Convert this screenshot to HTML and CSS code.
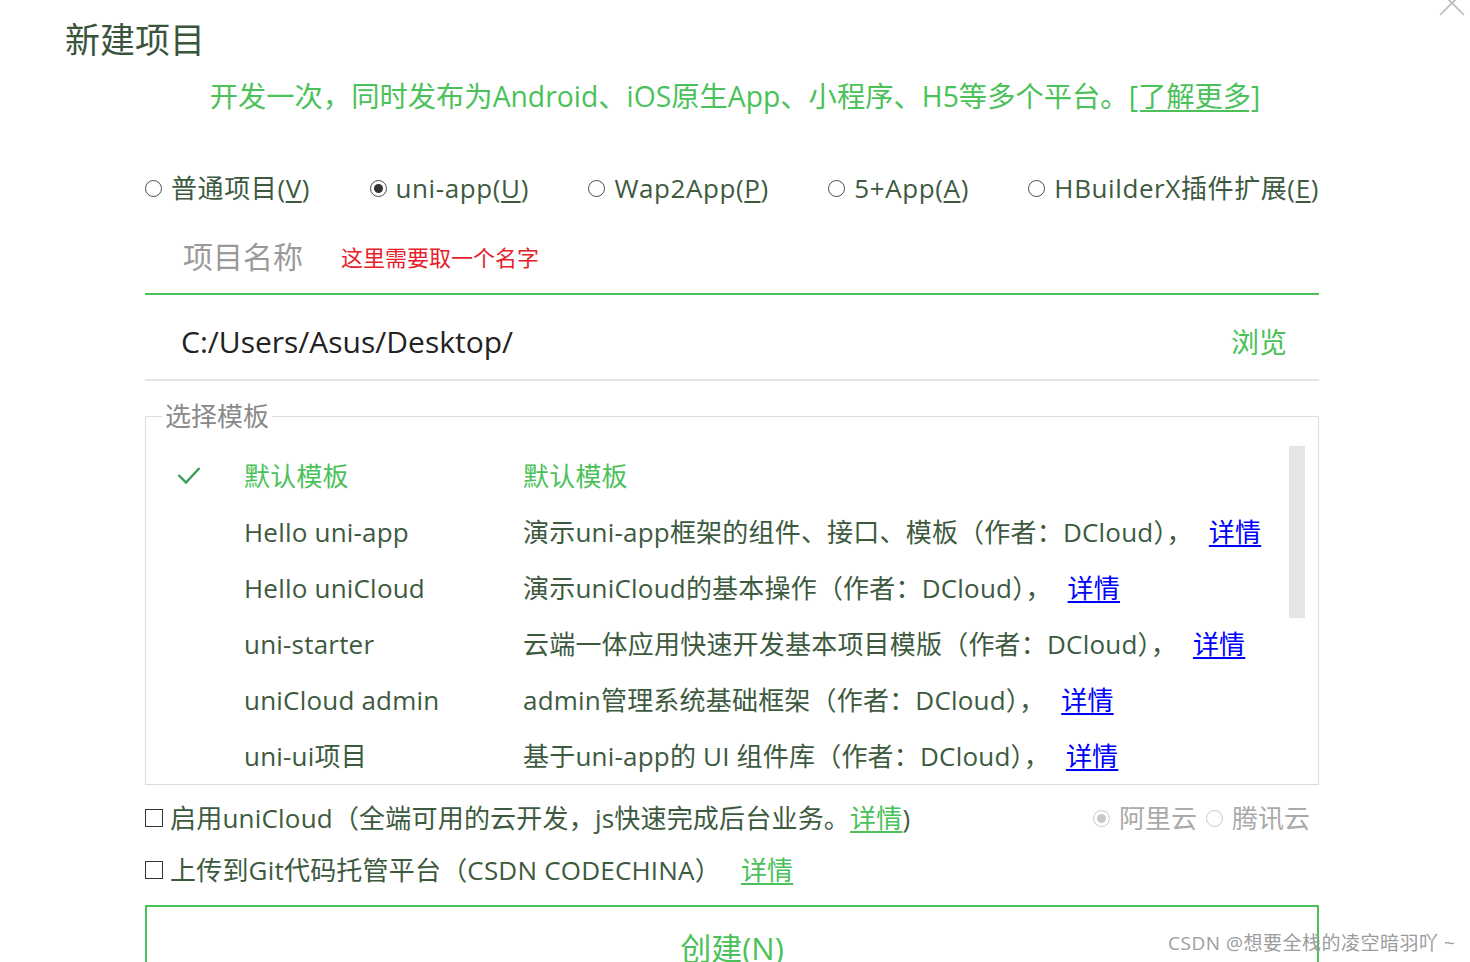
FILE: index.html
```html
<!DOCTYPE html>
<html lang="zh-CN">
<head>
<meta charset="utf-8">
<title>新建项目</title>
<link rel="stylesheet" href="styles.css">
</head>
<body>
<div class="page">
  <svg class="close" width="30" height="18" viewBox="0 0 30 18"><path d="M3 15 L15 3 L27 15 M3 -9 L15 3 L27 -9" fill="none" stroke="#b9b9b9" stroke-width="1.6"/></svg>

  <h1 class="title">新建项目</h1>
  <p class="intro">开发一次，同时发布为Android、iOS原生App、小程序、H5等多个平台。<a class="more">[了解更多]</a></p>

  <div class="form">
    <div class="types">
      <label class="radio"><span class="dot"></span><span>普通项目(<u>V</u>)</span></label>
      <label class="radio"><span class="dot on"></span><span>uni-app(<u>U</u>)</span></label>
      <label class="radio"><span class="dot"></span><span>Wap2App(<u>P</u>)</span></label>
      <label class="radio"><span class="dot"></span><span>5+App(<u>A</u>)</span></label>
      <label class="radio"><span class="dot"></span><span>HBuilderX插件扩展(<u>E</u>)</span></label>
    </div>

    <div class="field name">
      <span class="placeholder">项目名称</span>
      <span class="hint">这里需要取一个名字</span>
    </div>

    <div class="field path">
      <span class="value">C:/Users/Asus/Desktop/</span>
      <span class="browse">浏览</span>
    </div>

    <fieldset class="templates">
      <legend>选择模板</legend>
      <div class="list">
        <div class="row sel">
          <span class="chk"><svg width="24" height="20" viewBox="0 0 24 20"><path d="M1.5 9 L9 16.5 L22.5 2" fill="none" stroke="#3a9d57" stroke-width="2.4"/></svg></span>
          <span>默认模板</span><span>默认模板</span>
        </div>
        <div class="row"><span class="chk"></span><span>Hello uni-app</span><span>演示uni-app框架的组件、接口、模板（作者：DCloud），<a class="link">详情</a></span></div>
        <div class="row"><span class="chk"></span><span>Hello uniCloud</span><span>演示uniCloud的基本操作（作者：DCloud），<a class="link">详情</a></span></div>
        <div class="row"><span class="chk"></span><span>uni-starter</span><span>云端一体应用快速开发基本项目模版（作者：DCloud），<a class="link">详情</a></span></div>
        <div class="row"><span class="chk"></span><span>uniCloud admin</span><span>admin管理系统基础框架（作者：DCloud），<a class="link">详情</a></span></div>
        <div class="row"><span class="chk"></span><span>uni-ui项目</span><span>基于uni-app的 UI 组件库（作者：DCloud），<a class="link">详情</a></span></div>
        <div class="thumb"></div>
      </div>
    </fieldset>

    <div class="option">
      <label class="check"><span class="box"></span><span>启用uniCloud（全端可用的云开发，js快速完成后台业务。<a class="glink">详情</a>)</span></label>
      <div class="clouds">
        <label class="radio gray"><span class="dot on"></span><span>阿里云</span></label>
        <label class="radio gray"><span class="dot"></span><span>腾讯云</span></label>
      </div>
    </div>
    <div class="option second">
      <label class="check"><span class="box"></span><span>上传到Git代码托管平台（CSDN CODECHINA）<a class="glink gap">详情</a></span></label>
    </div>

    <div class="create">创建(N)</div>
  </div>

  <div class="watermark">CSDN @想要全栈的凌空暗羽吖 ~</div>
</div>
</body>
</html>
```

FILE: styles.css
```css
html, body {
  margin: 0;
  padding: 0;
  background: #fff;
}
body {
  font-family: "Open Sans", "Noto Sans CJK SC", sans-serif;
  color: #3d5a3f;
}
.page {
  position: relative;
  width: 1470px;
  height: 962px;
  overflow: hidden;
}
.close {
  position: absolute;
  left: 1437px;
  top: 0;
}
.title {
  margin: 18px 0 0 65px;
  font-size: 35px;
  line-height: 44px;
  font-weight: 400;
  color: #3b553d;
}
.intro {
  margin: 14px 0 0;
  text-align: center;
  font-size: 28.3px;
  line-height: 40px;
  color: #4bc15a;
}
.more {
  text-decoration: underline;
  text-underline-offset: 3px;
}
.form {
  width: 1174px;
  margin: 54px 0 0 145px;
}
.types {
  display: flex;
  justify-content: space-between;
  font-size: 26px;
  line-height: 36px;
  letter-spacing: 0.6px;
}
.radio {
  display: flex;
  align-items: center;
  gap: 9px;
}
.dot {
  width: 17px;
  height: 17px;
  border: 1px solid #4a4a4a;
  border-radius: 50%;
  box-sizing: border-box;
  display: flex;
  align-items: center;
  justify-content: center;
  flex: none;
}
.dot.on::after {
  content: "";
  width: 9px;
  height: 9px;
  border-radius: 50%;
  background: #333;
}
.radio u {
  text-underline-offset: 3px;
}
.field {
  display: flex;
  align-items: center;
  line-height: 40px;
}
.name {
  padding: 31px 0 16px 38px;
  border-bottom: 2px solid #4bc15a;
  gap: 38px;
}
.placeholder {
  font-size: 30px;
  color: #9a9a9a;
}
.hint {
  font-size: 22px;
  color: #e8202a;
}
.path {
  padding: 27px 32px 17px 36px;
  border-bottom: 2px solid #e5e5e5;
  justify-content: space-between;
}
.value {
  font-size: 30px;
  color: #222;
}
.browse {
  font-size: 28px;
  color: #4bc15a;
}
.templates {
  margin: 20px 0 0;
  padding: 0;
  border: 1px solid #dcdcdc;
  min-width: 0;
}
.templates legend {
  margin-left: 16px;
  padding: 0 3px;
  font-size: 26px;
  line-height: 30px;
  color: #8a8a8a;
}
.list {
  position: relative;
  padding-top: 17px;
}
.row {
  display: grid;
  grid-template-columns: 98px 279px 1fr;
  align-items: center;
  height: 56px;
  font-size: 26px;
  line-height: 36px;
  letter-spacing: 0.2px;
}
.row.sel {
  color: #4bc15a;
}
.chk {
  display: flex;
  padding-left: 31px;
}
.link {
  margin-left: 16px;
  color: #0000ff;
  text-decoration: underline;
  text-underline-offset: 3px;
}
.thumb {
  position: absolute;
  left: 1143px;
  top: 15px;
  width: 16px;
  height: 172px;
  background: #e5e5e5;
}
.option {
  display: flex;
  justify-content: space-between;
  align-items: center;
  margin-top: 15px;
  padding-right: 9px;
  font-size: 26px;
  line-height: 36px;
  letter-spacing: 0.2px;
}
.option.second {
  margin-top: 16px;
}
.check {
  display: flex;
  align-items: center;
  gap: 7px;
}
.box {
  width: 18px;
  height: 18px;
  border: 1px solid #333;
  box-sizing: border-box;
  flex: none;
}
.glink {
  color: #4bc15a;
  text-decoration: underline;
  text-underline-offset: 3px;
}
.glink.gap {
  margin-left: 20px;
}
.clouds {
  display: flex;
  gap: 9px;
  letter-spacing: 0;
}
.radio.gray {
  color: #aaa;
}
.radio.gray .dot {
  border-color: #c8c8c8;
}
.radio.gray .dot.on::after {
  background: #c8c8c8;
}
.create {
  margin-top: 17px;
  height: 120px;
  border: 2px solid #4bc15a;
  text-align: center;
  padding-top: 21px;
  font-size: 31px;
  line-height: 40px;
  color: #4bc15a;
}
.watermark {
  position: absolute;
  left: 1168px;
  top: 930px;
  font-size: 19px;
  line-height: 26px;
  letter-spacing: 0.5px;
  color: #9c9c9c;
}
```
